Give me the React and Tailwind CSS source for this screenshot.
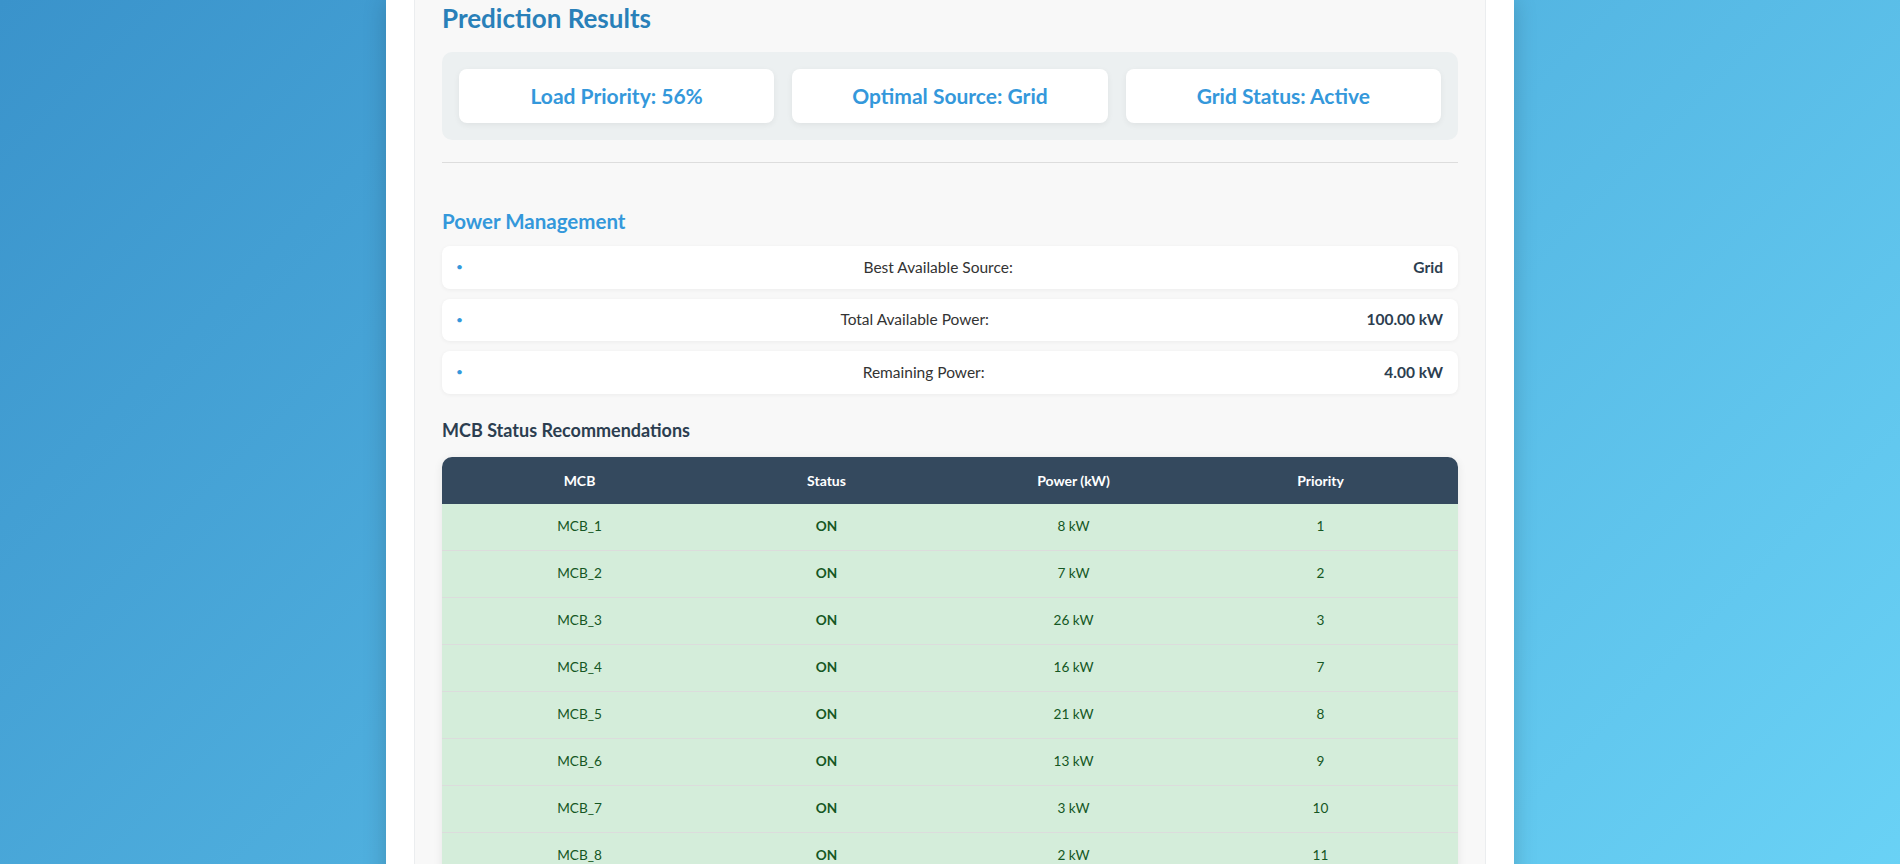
import React from "react";

const mcbs = [
  { name: "MCB_1", power: 8, priority: 1 },
  { name: "MCB_2", power: 7, priority: 2 },
  { name: "MCB_3", power: 26, priority: 3 },
  { name: "MCB_4", power: 16, priority: 7 },
  { name: "MCB_5", power: 21, priority: 8 },
  { name: "MCB_6", power: 13, priority: 9 },
  { name: "MCB_7", power: 3, priority: 10 },
  { name: "MCB_8", power: 2, priority: 11 },
  { name: "MCB_9", power: 4, priority: 12 },
];

const powerInfo = [
  { label: "Best Available Source:", value: "Grid" },
  { label: "Total Available Power:", value: "100.00 kW" },
  { label: "Remaining Power:", value: "4.00 kW" },
];

export default function App() {
  return (
    <div className="min-h-screen bg-[linear-gradient(135deg,#3a93cb_0%,#6bd4f7_100%)] font-['Lato','Noto_Sans',sans-serif]">
      <div className="mx-auto w-[1128px] bg-white px-[28px] shadow-[0_0_22px_rgba(0,0,0,0.18)]">
        <div className="border-x border-[#ebedef] bg-[#f8f8f8] px-[27px] pt-[2px] pb-10">
          <h2 className="text-[26px] leading-[32px] font-bold text-[#2980b9]">Prediction Results</h2>

          <div className="mt-[18px] grid grid-cols-3 gap-[18px] rounded-[10px] bg-[#ecf0f1] p-[17px]">
            {["Load Priority: 56%", "Optimal Source: Grid", "Grid Status: Active"].map((t) => (
              <div
                key={t}
                className="flex h-[54px] items-center justify-center rounded-[8px] bg-white text-[21px] font-bold text-[#3498db] shadow-[0_2px_6px_rgba(0,0,0,0.06)]"
              >
                {t}
              </div>
            ))}
          </div>

          <div className="mt-[22px] h-px bg-[#dddddd]" />

          <h3 className="mt-[46px] text-[20.5px] leading-[24px] font-bold text-[#3498db]">Power Management</h3>
          <div className="mt-[13px] space-y-[10px]">
            {powerInfo.map((p) => (
              <div
                key={p.label}
                className="flex h-[42.5px] items-center justify-between rounded-[8px] bg-white pr-[15px] pl-[14px] text-[15.5px] shadow-[0_1px_4px_rgba(0,0,0,0.05)]"
              >
                <span className="text-[12px] text-[#3498db]">•</span>
                <span className="text-[#333]">{p.label}</span>
                <span className="font-bold text-[#2c3e50]">{p.value}</span>
              </div>
            ))}
          </div>

          <h4 className="mt-[26px] text-[18px] leading-[20px] font-bold text-[#2c3e50]">MCB Status Recommendations</h4>

          <div className="mt-[17px] overflow-hidden rounded-t-[10px] shadow-[0_2px_10px_rgba(0,0,0,0.08)]">
            <div className="grid h-[47px] grid-cols-4 items-center bg-[#34495e] px-[14px] text-center text-[14px] font-bold text-white">
              <div>MCB</div>
              <div>Status</div>
              <div>Power (kW)</div>
              <div>Priority</div>
            </div>
            {mcbs.map((m) => (
              <div
                key={m.name}
                className="grid h-[47px] grid-cols-4 items-center border-b border-[#dcdcdc] bg-[#d4edda] px-[14px] text-center text-[13.6px] text-[#155724]"
              >
                <div>{m.name}</div>
                <div className="font-bold">ON</div>
                <div>{m.power} kW</div>
                <div>{m.priority}</div>
              </div>
            ))}
          </div>
        </div>
      </div>
    </div>
  );
}
